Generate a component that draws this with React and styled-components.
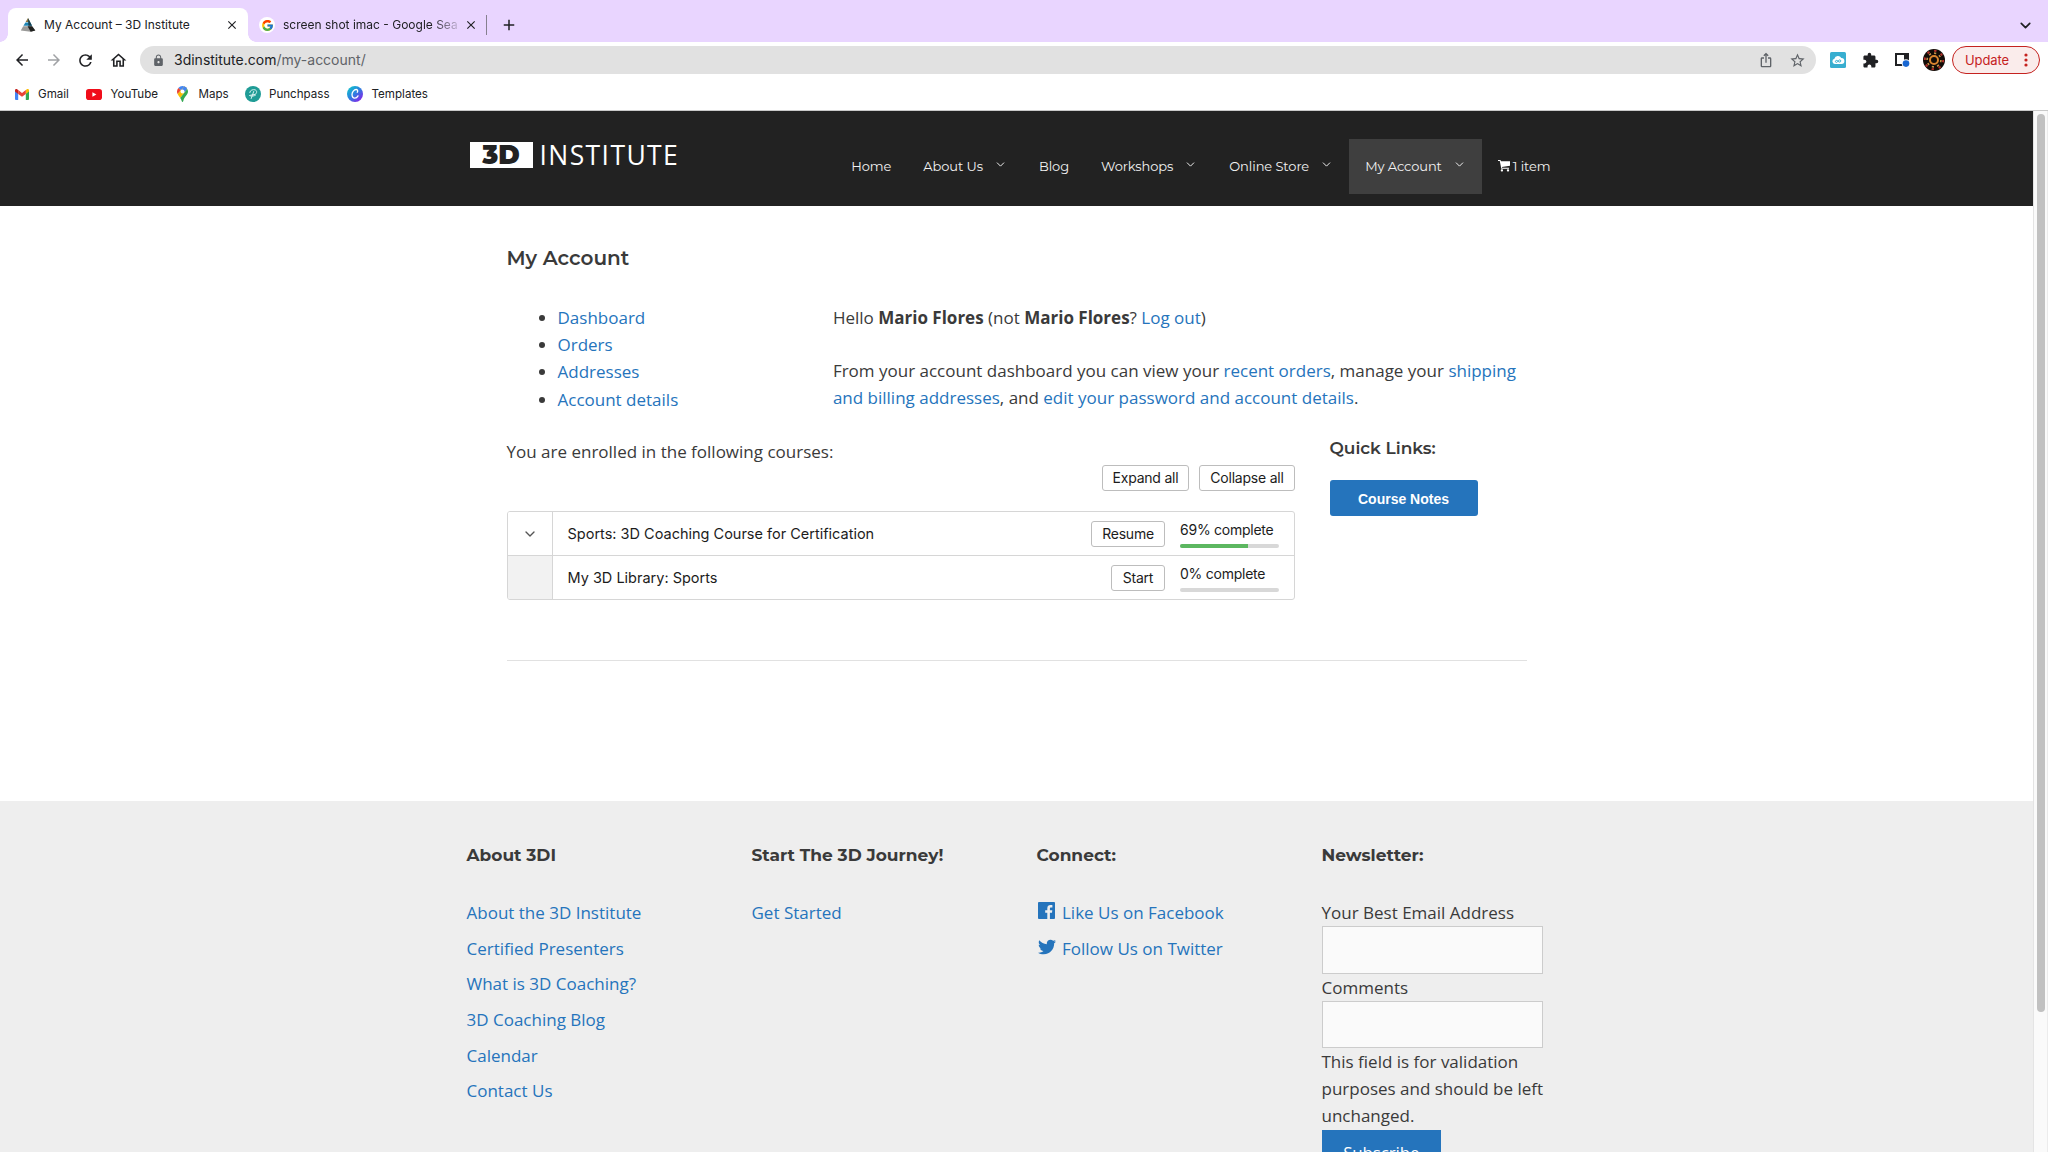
import React from "react";
import styled, { createGlobalStyle } from "styled-components";
import {
  MdArrowBack, MdArrowForward, MdRefresh, MdOutlineHome, MdLock, MdIosShare,
  MdStarBorder, MdExtension, MdClose, MdAdd,
} from "react-icons/md";
import { FaTwitter } from "react-icons/fa";
import { FcGoogle } from "react-icons/fc";
import { ChevronDown } from "lucide-react";

const UI = `Inter, "Liberation Sans", sans-serif`;
const BODY = `"Open Sans", "Noto Sans", sans-serif`;
const HEAD = `Montserrat, Inter, sans-serif`;
const BLUE = "#2574bc";

const GlobalStyle = createGlobalStyle`
  *, *::before, *::after { box-sizing: border-box; }
  body { margin: 0; background: #fff; }
  a { color: inherit; text-decoration: none; }
  svg { display: block; flex: none; }
`;

const Window = styled.div`
  width: 2048px;
  height: 1152px;
  overflow: hidden;
  display: flex;
  flex-direction: column;
  font-family: ${UI};
  color: #202124;
`;

/* ---------- browser chrome ---------- */
const TabStrip = styled.div`
  height: 42px;
  flex: none;
  background: #e9d5ff;
  display: flex;
  align-items: flex-end;
  padding: 0 14px 0 8px;
`;
const Tab = styled.div`
  height: 34px;
  width: ${(p) => p.$width}px;
  display: flex;
  align-items: center;
  padding: 0 ${(p) => (p.$active ? 9 : 2)}px 0 ${(p) => (p.$active ? 12 : 11)}px;
  position: relative;
  background: ${(p) => (p.$active ? "#fff" : "transparent")};
  border-radius: 8px 8px 0 0;
  &::before, &::after {
    content: "";
    display: ${(p) => (p.$active ? "block" : "none")};
    position: absolute;
    bottom: 0;
    width: 8px;
    height: 8px;
  }
  &::before { left: -8px; background: radial-gradient(circle at 0 0, transparent 7.5px, #fff 8px); }
  &::after { right: -8px; background: radial-gradient(circle at 100% 0, transparent 7.5px, #fff 8px); }
`;
const TabTitle = styled.span`
  flex: 1;
  font-size: 12px;
  line-height: 16px;
  margin-left: ${(p) => p.$gap}px;
  white-space: nowrap;
  overflow: hidden;
  mask-image: ${(p) => (p.$fade ? "linear-gradient(90deg, #000 150px, transparent 180px)" : "none")};
`;
const TabSeparator = styled.i`
  width: 1px;
  height: 20px;
  background: #86808f;
  margin: 0 13px 7px 6px;
`;
const TabSlot = styled.div`
  height: 34px;
  display: flex;
  align-items: center;
  margin-left: ${(p) => (p.$end ? "auto" : 0)};
`;
const IconDisc = styled.span`
  width: 16px;
  height: 16px;
  border-radius: 50%;
  background: #fff;
  display: grid;
  place-items: center;
`;

const Toolbar = styled.div`
  height: 36px;
  flex: none;
  display: flex;
  align-items: center;
  padding: 0 8px 0 13px;
  background: #fff;
`;
const NavButtons = styled.div`
  display: flex;
  gap: 13.5px;
  width: 127px;
  color: #202124;
`;
const Omnibox = styled.div`
  width: 1676px;
  height: 28px;
  border-radius: 14px;
  background: #e1e1e1;
  display: flex;
  align-items: center;
  padding: 0 10px 0 12px;
  color: #5f6368;
`;
const Url = styled.span`
  flex: 1;
  margin-left: 9px;
  font-size: 14px;
  line-height: 20px;
  color: #5f6368;
  b { font-weight: 400; color: #202124; }
`;
const OmniActions = styled.div`
  display: flex;
  gap: 15px;
`;
const Extensions = styled.div`
  flex: 1;
  display: flex;
  align-items: center;
  margin-left: 14px;
`;
const ExtSlot = styled.span`
  width: ${(p) => p.$width}px;
  display: flex;
`;
const UpdatePill = styled.button`
  width: 88px;
  height: 28px;
  margin-left: auto;
  padding: 0 11px 0 12px;
  border: 1px solid #c5221f;
  border-radius: 14px;
  background: #faeceb;
  color: #c5221f;
  font: 400 13px/20px ${UI};
  letter-spacing: -0.1px;
  display: flex;
  align-items: center;
  justify-content: space-between;
`;
const Bookmarks = styled.div`
  height: 33px;
  flex: none;
  display: flex;
  padding: 7px 0 0 15px;
  border-bottom: 1px solid #c9c9c9;
  font-size: 11.6px;
  line-height: 17px;
  background: #fff;
`;
const Bookmark = styled.a`
  width: ${(p) => p.$width}px;
  height: 18px;
  display: flex;
  align-items: center;
  gap: ${(p) => p.$gap}px;
`;

/* ---------- page ---------- */
const Viewport = styled.div`
  flex: 1;
  min-height: 0;
  display: flex;
`;
const Site = styled.main`
  flex: 1;
  overflow: hidden;
  display: flex;
  flex-direction: column;
  font: 400 17px/27.2px ${BODY};
  color: #3a3a3a;
`;
const ScrollTrack = styled.div`
  width: 15px;
  background: #fafafa;
  border-left: 1px solid #e4e4e4;
  border-right: 1px solid #ececec;
  padding: 3px 2px 0 3px;
`;
const ScrollThumb = styled.div`
  height: 898px;
  width: 8px;
  border-radius: 4px;
  background: #c1c1c1;
`;
const Header = styled.header`
  height: 95px;
  flex: none;
  background: #222;
`;
const HeaderInner = styled.div`
  width: 1100px;
  margin: 0 auto;
  display: flex;
  justify-content: space-between;
  padding-top: 28px;
`;
const Logo = styled.a`
  display: flex;
  align-items: center;
  height: 32px;
  padding: 0 0 0 3px;
  color: #fff;
`;
const LogoMark = styled.span`
  width: 63px;
  height: 26px;
  background: #fff;
  color: #222;
  display: grid;
  place-items: center;
  font: 900 26px/26px ${HEAD};
`;
const LogoWord = styled.span`
  margin-left: 7px;
  font: 400 26.5px/26px ${BODY};
  letter-spacing: 1.4px;
`;
const Nav = styled.nav`
  display: flex;
  font: 400 13px/55px ${HEAD};
  letter-spacing: -0.08px;
  color: #f2f2f2;
`;
const NavItem = styled.a`
  height: 55px;
  padding: 0 16px;
  display: flex;
  background: ${(p) => (p.$current ? "#3f3f3f" : "transparent")};
`;
const NavArrow = styled.span`
  width: 24px;
  height: 55px;
  padding: 0 0 4px 0;
  display: flex;
  align-items: center;
  justify-content: flex-end;
`;
const CartIcon = styled.span`
  height: 55px;
  padding: 0 3px 1px 0;
  display: flex;
  align-items: center;
`;

const Content = styled.article`
  width: 1100px;
  height: 595px;
  flex: none;
  margin: 0 auto;
  padding: 40px 40px 0;
`;
const PageTitle = styled.h1`
  margin: 0 0 34px;
  font: 600 20px/24px ${HEAD};
`;
const AccountGrid = styled.div`
  display: grid;
  grid-template-columns: 326.4px 1fr;
`;
const AccountNav = styled.ul`
  margin: 0;
  padding: 0 0 0 51px;
`;
const Link = styled.a`
  color: ${BLUE};
`;
const Paragraph = styled.p`
  margin: 0 0 25.5px;
  white-space: nowrap;
`;
const CoursesGrid = styled.div`
  display: grid;
  grid-template-columns: 788px 1fr;
  column-gap: 35px;
  margin-top: 1.4px;
  height: 223px;
  border-bottom: 1px solid #e1e1e1;
`;
const Intro = styled.p`
  margin: 0;
`;
const ButtonRow = styled.div`
  display: flex;
  justify-content: flex-end;
  gap: 10px;
  margin-bottom: 20px;
`;
const SmallButton = styled.button`
  width: ${(p) => p.$width}px;
  height: 26px;
  padding: 0 0 0 1px;
  border: 1px solid #bdbdbd;
  border-radius: 3px;
  background: #fff;
  color: #1c1c1c;
  font: 400 14px/22px ${UI};
  letter-spacing: -0.22px;
  text-align: center;
`;
const CourseTable = styled.div`
  border: 1px solid #d6d6d6;
  border-radius: 3px;
  overflow: hidden;
  font-family: ${UI};
  color: #1c1c1c;
`;
const CourseRow = styled.div`
  height: ${(p) => (p.$first ? 44 : 43)}px;
  border-bottom: ${(p) => (p.$first ? "1px solid #d6d6d6" : "0")};
  display: flex;
  align-items: center;
`;
const ToggleCell = styled.div`
  width: 45px;
  align-self: stretch;
  display: grid;
  place-items: center;
  border-right: 1px solid #d6d6d6;
  background: ${(p) => (p.$empty ? "#f2f2f2" : "#fff")};
  color: #555;
`;
const CourseName = styled.span`
  flex: 1;
  padding: 1px 0 0 15px;
  font-size: 14.5px;
  line-height: 22px;
`;
const Progress = styled.div`
  width: 99px;
  margin: 1px 15px 0;
`;
const ProgressLabel = styled.div`
  font-size: 14px;
  line-height: 18px;
  letter-spacing: -0.25px;
  padding-left: 0.5px;
  margin-bottom: 5px;
`;
const ProgressBar = styled.div`
  height: 4px;
  border-radius: 2px;
  background: #d8d8d8;
  overflow: hidden;
`;
const ProgressFill = styled.div`
  height: 4px;
  background: #5cb760;
`;
const QuickTitle = styled.h3`
  margin: -1px 0 21px;
  font: 600 17px/22px ${HEAD};
`;
const NotesButton = styled.a`
  display: block;
  width: 148px;
  height: 36px;
  border-radius: 3px;
  background: ${BLUE};
  color: #fff;
  text-align: center;
  font: 700 14px/38px "Liberation Sans", Arial, sans-serif;
`;

const Footer = styled.footer`
  flex: 1;
  min-height: 0;
  background: #eee;
`;
const FooterInner = styled.div`
  width: 1100px;
  margin: 0 auto;
  padding-top: 41px;
  display: grid;
  grid-template-columns: repeat(4, 245px);
  column-gap: 40px;
`;
const FooterTitle = styled.h2`
  margin: 0 0 30px;
  font: 700 17px/27px ${HEAD};
`;
const FooterLink = styled.a`
  display: flex;
  height: 27.2px;
  margin-bottom: 8.5px;
  color: ${BLUE};
`;
const SocialIcon = styled.span`
  width: 25.5px;
  padding: ${(p) => p.$top}px 0 0 1px;
`;
const FieldLabel = styled.label`
  display: block;
  height: 27px;
`;
const Field = styled.input`
  display: block;
  width: 221.5px;
  height: ${(p) => p.$height}px;
  border: 1px solid #ccc;
  border-radius: 0;
  background: #fafafa;
`;
const FieldNote = styled.p`
  margin: 0;
  width: 223px;
`;
const Subscribe = styled.button`
  display: block;
  width: 119.5px;
  height: 46px;
  border: 0;
  padding: 0;
  background: ${BLUE};
  color: #fff;
  font: 400 17px/46px ${BODY};
  letter-spacing: -0.15px;
`;

/* ---------- drawings ---------- */
const PyramidIcon = () => (
  <svg width="16" height="16" viewBox="0 0 16 16">
    <path d="M8 1L5.600 5h4.600z" fill="#8a7440" />
    <path d="M5.400 5.400h5l1.600 3.400H3.400z" fill="#1c84b4" />
    <path d="M8 1l2.400 4.400L12 8.800H8.400z" fill="#17414f" />
    <path d="M3.200 9.200h8.900l3.200 4.300-4.600 1.200L.8 13.600z" fill="#9a9a98" />
    <path d="M7.600 9.200h4.500l3.200 4.300-4.600 1.200z" fill="#20211f" />
  </svg>
);
const GmailIcon = () => (
  <svg width="14" height="11" viewBox="0 0 14 11">
    <path d="M0 1.500V10a1 1 0 001 1h2.200V4z" fill="#4285f4" />
    <path d="M14 1.500V10a1 1 0 01-1 1h-2.200V4z" fill="#34a853" />
    <path d="M10.800 1v3.900L14 2.500V1.400C14 .1 12.500-.4 11.600.4z" fill="#fbbc04" />
    <path d="M3.200 1v3.900L0 2.500V1.400C0 .1 1.500-.4 2.400.4z" fill="#c5221f" />
    <path d="M3.200 4.900V1L7 3.900 10.800 1v3.900L7 7.800z" fill="#ea4335" />
  </svg>
);
const YouTubeIcon = () => (
  <svg width="16" height="11" viewBox="0 0 16 11">
    <rect width="16" height="11" rx="2.800" fill="#f00d1a" />
    <path d="M6.400 3.200v4.600l4-2.300z" fill="#fff" />
  </svg>
);
const MapsIcon = () => (
  <svg width="11" height="16" viewBox="0 0 11 16">
    <path d="M5.500 0A5.500 5.500 0 001.300 2L4 4.200 7.200.3A5.500 5.500 0 005.500 0z" fill="#4285f4" />
    <path d="M1.300 2A5.500 5.500 0 000 5.500c0 1 .2 1.800.6 2.600L4 4.200z" fill="#ea4335" />
    <path d="M.6 8.100c.6 1.300 1.800 2.500 2.600 3.800l7-8.900A5.500 5.500 0 007.200.3z" fill="#fbbc04" />
    <path d="M7.200.3a5.500 5.500 0 013 2.600L7.300 6.400 4 4.200z" fill="#4285f4" />
    <path d="M10.200 2.900c.5.800.8 1.700.8 2.600 0 3.700-3.600 4.600-4.700 9.400-.3 1.400-1.300 1.400-1.600 0-.3-1.200-.8-2.100-1.500-3z" fill="#34a853" />
    <circle cx="5.500" cy="5.400" r="2" fill="#fff" />
  </svg>
);
const PunchpassIcon = () => (
  <svg width="16" height="16" viewBox="0 0 16 16">
    <circle cx="8" cy="8" r="8" fill="#1f9c96" />
    <path d="M4.800 6.500C5 4 8 3.300 10 3.800s2.300 3.300.2 4.500c-1.500.8-3 .3-4.600.8M8.700 5.500L6.200 12.500M4.500 9.600c2 .9 4.500.6 6-.4" fill="none" stroke="#d8f3f1" strokeWidth="1" strokeLinecap="round" />
  </svg>
);
const TemplatesIcon = () => (
  <svg width="16" height="16" viewBox="0 0 16 16">
    <defs>
      <linearGradient id="canvaFill" x1="0.100" y1="0.100" x2="0.800" y2="0.900">
        <stop offset="0" stopColor="#10c0cc" />
        <stop offset="0.500" stopColor="#2c7fe0" />
        <stop offset="1" stopColor="#7d2ae8" />
      </linearGradient>
    </defs>
    <circle cx="8" cy="8" r="8" fill="url(#canvaFill)" />
    <path d="M10.200 6.200c.8-.6.7-2.600-.9-2.700C7 3.400 5 6 5 8.600c0 2.300 1.200 3.600 2.800 3.500 1.400 0 2.500-.9 3.200-2.200" fill="none" stroke="#fff" strokeWidth="1.300" strokeLinecap="round" />
  </svg>
);
const CloudIcon = () => (
  <svg width="16" height="16" viewBox="0 0 16 16">
    <rect width="16" height="16" rx="1.500" fill="#38aed0" />
    <path d="M4.800 12a2.700 2.700 0 01-.4-5.300A3.700 3.700 0 0111.300 6a3 3 0 01.2 6z" fill="#fff" />
    <path d="M8 9.200c-1-1.300-2.600-.9-2.600.3s1.700 1.400 2.600-.3 2.800-1.700 2.800-.3S9 10.500 8 9.200z" fill="none" stroke="#38aed0" strokeWidth="1" />
  </svg>
);
const SidePanelIcon = () => (
  <svg width="16" height="16" viewBox="0 0 16 16">
    <path d="M1 1h14v13H1z" fill="#202124" />
    <path d="M3 3h7v9H3z" fill="#fff" />
    <circle cx="12" cy="11.600" r="4.300" fill="#fff" />
    <circle cx="12" cy="11.600" r="3.300" fill="#1967d2" />
  </svg>
);
const AvatarIcon = () => (
  <svg width="22" height="22" viewBox="0 0 22 22">
    <circle cx="11" cy="11" r="11" fill="#120c08" />
    <circle cx="11" cy="11" r="9.200" fill="none" stroke="#b5302a" strokeWidth="2" strokeDasharray="2.400 4.800" />
    <circle cx="11" cy="11" r="6.900" fill="none" stroke="#c8934a" strokeWidth="1.600" strokeDasharray="2.200 3.200" />
    <circle cx="11" cy="11" r="4" fill="none" stroke="#d9842e" strokeWidth="2" />
  </svg>
);
const DotsIcon = () => (
  <svg width="4" height="14" viewBox="0 0 4 14" fill="#c5221f">
    <circle cx="2" cy="2" r="1.600" />
    <circle cx="2" cy="7" r="1.600" />
    <circle cx="2" cy="12" r="1.600" />
  </svg>
);
const CartGlyph = () => (
  <svg width="12" height="12" viewBox="0 0 12 12" fill="#fff">
    <path d="M0 0h2.500l.4 1.200H12v4.600L3.900 6.900l.2.900H11v1H3.300L1.800 1H0z" />
    <rect x="2.800" y="9.300" width="2.200" height="2.200" rx="0.800" />
    <rect x="8.900" y="9.300" width="2.200" height="2.200" rx="0.800" />
  </svg>
);
const FacebookIcon = () => (
  <svg width="17" height="17" viewBox="0 0 17 17">
    <rect width="17" height="17" rx="0.900" fill={BLUE} />
    <path d="M9.300 17v-6.300H7.200V8.200h2.100V6.400c0-2.200 1.300-3.300 3.200-3.300.9 0 1.700.1 1.900.1v2.300h-1.300c-1 0-1.200.5-1.200 1.200v1.500h2.400l-.3 2.500h-2.100V17z" fill="#eee" />
  </svg>
);

const NAV_ITEMS = [
  { label: "Home" },
  { label: "About Us", menu: true },
  { label: "Blog" },
  { label: "Workshops", menu: true },
  { label: "Online Store", menu: true },
  { label: "My Account", menu: true, current: true },
];
const BOOKMARKS = [
  { label: "Gmail", icon: <GmailIcon />, width: 71, gap: 9 },
  { label: "YouTube", icon: <YouTubeIcon />, width: 91, gap: 8.5 },
  { label: "Maps", icon: <MapsIcon />, width: 68, gap: 10.5 },
  { label: "Punchpass", icon: <PunchpassIcon />, width: 102, gap: 8 },
  { label: "Templates", icon: <TemplatesIcon />, width: 90, gap: 8.5 },
];
const COURSES = [
  { name: "Sports: 3D Coaching Course for Certification", action: "Resume", width: 74, done: 69, open: true },
  { name: "My 3D Library: Sports", action: "Start", width: 54, done: 0 },
];
const ABOUT_LINKS = [
  "About the 3D Institute", "Certified Presenters", "What is 3D Coaching?",
  "3D Coaching Blog", "Calendar", "Contact Us",
];

function BrowserChrome() {
  return (
    <>
      <TabStrip>
        <Tab $active $width={240}>
          <PyramidIcon />
          <TabTitle $gap={8}>My Account – 3D Institute</TabTitle>
          <MdClose size={14} />
        </Tab>
        <Tab $width={232}>
          <IconDisc><FcGoogle size={13} /></IconDisc>
          <TabTitle $gap={8} $fade>screen shot imac - Google Sea</TabTitle>
          <MdClose size={14} />
        </Tab>
        <TabSeparator />
        <TabSlot><MdAdd size={18} /></TabSlot>
        <TabSlot $end><ChevronDown size={17} strokeWidth={2.4} /></TabSlot>
      </TabStrip>
      <Toolbar>
        <NavButtons>
          <MdArrowBack size={18} />
          <MdArrowForward size={18} color="#a0a2a5" />
          <MdRefresh size={19} />
          <MdOutlineHome size={19} />
        </NavButtons>
        <Omnibox>
          <MdLock size={13} />
          <Url><b>3dinstitute.com</b>/my-account/</Url>
          <OmniActions>
            <MdIosShare size={16} />
            <MdStarBorder size={17} />
          </OmniActions>
        </Omnibox>
        <Extensions>
          <ExtSlot $width={32}><CloudIcon /></ExtSlot>
          <ExtSlot $width={32}><MdExtension size={17} /></ExtSlot>
          <ExtSlot $width={29}><SidePanelIcon /></ExtSlot>
          <ExtSlot $width={22}><AvatarIcon /></ExtSlot>
          <UpdatePill>Update<DotsIcon /></UpdatePill>
        </Extensions>
      </Toolbar>
      <Bookmarks>
        {BOOKMARKS.map((b) => (
          <Bookmark key={b.label} $width={b.width} $gap={b.gap}>{b.icon}{b.label}</Bookmark>
        ))}
      </Bookmarks>
    </>
  );
}

function SiteHeader() {
  return (
    <Header>
      <HeaderInner>
        <Logo>
          <LogoMark>3D</LogoMark>
          <LogoWord>INSTITUTE</LogoWord>
        </Logo>
        <Nav>
          {NAV_ITEMS.map((n) => (
            <NavItem key={n.label} $current={n.current}>
              {n.label}
              {n.menu && <NavArrow><ChevronDown size={13} strokeWidth={1.8} /></NavArrow>}
            </NavItem>
          ))}
          <NavItem>
            <CartIcon><CartGlyph /></CartIcon>
            1 item
          </NavItem>
        </Nav>
      </HeaderInner>
    </Header>
  );
}

function Courses() {
  return (
    <CoursesGrid>
      <div>
        <Intro>You are enrolled in the following courses:</Intro>
        <ButtonRow>
          <SmallButton $width={87}>Expand all</SmallButton>
          <SmallButton $width={96}>Collapse all</SmallButton>
        </ButtonRow>
        <CourseTable>
          {COURSES.map((c) => (
            <CourseRow key={c.name} $first={c.open}>
              <ToggleCell $empty={!c.open}>{c.open && <ChevronDown size={16} strokeWidth={2} />}</ToggleCell>
              <CourseName>{c.name}</CourseName>
              <SmallButton $width={c.width}>{c.action}</SmallButton>
              <Progress>
                <ProgressLabel>{c.done}% complete</ProgressLabel>
                <ProgressBar><ProgressFill style={{ width: `${c.done}%` }} /></ProgressBar>
              </Progress>
            </CourseRow>
          ))}
        </CourseTable>
      </div>
      <div>
        <QuickTitle>Quick Links:</QuickTitle>
        <NotesButton>Course Notes</NotesButton>
      </div>
    </CoursesGrid>
  );
}

function SiteFooter() {
  return (
    <Footer>
      <FooterInner>
        <section>
          <FooterTitle>About 3DI</FooterTitle>
          {ABOUT_LINKS.map((l) => <FooterLink key={l}>{l}</FooterLink>)}
        </section>
        <section>
          <FooterTitle>Start The 3D Journey!</FooterTitle>
          <FooterLink>Get Started</FooterLink>
        </section>
        <section>
          <FooterTitle>Connect:</FooterTitle>
          <FooterLink><SocialIcon $top={3}><FacebookIcon /></SocialIcon>Like Us on Facebook</FooterLink>
          <FooterLink><SocialIcon $top={3}><FaTwitter size={18} /></SocialIcon>Follow Us on Twitter</FooterLink>
        </section>
        <section>
          <FooterTitle>Newsletter:</FooterTitle>
          <FieldLabel>Your Best Email Address</FieldLabel>
          <Field $height={48} />
          <FieldLabel>Comments</FieldLabel>
          <Field $height={47} />
          <FieldNote>This field is for validation purposes and should be left unchanged.</FieldNote>
          <Subscribe>Subscribe</Subscribe>
        </section>
      </FooterInner>
    </Footer>
  );
}

export default function App() {
  return (
    <Window>
      <GlobalStyle />
      <BrowserChrome />
      <Viewport>
        <Site>
          <SiteHeader />
          <Content>
            <PageTitle>My Account</PageTitle>
            <AccountGrid>
              <AccountNav>
                <li><Link>Dashboard</Link></li>
                <li><Link>Orders</Link></li>
                <li><Link>Addresses</Link></li>
                <li><Link>Account details</Link></li>
              </AccountNav>
              <div>
                <Paragraph>
                  Hello <strong>Mario Flores</strong> (not <strong>Mario Flores</strong>? <Link>Log out</Link>)
                </Paragraph>
                <Paragraph>
                  From your account dashboard you can view your <Link>recent orders</Link>, manage your <Link>shipping<br />and billing addresses</Link>, and <Link>edit your password and account details</Link>.
                </Paragraph>
              </div>
            </AccountGrid>
            <Courses />
          </Content>
          <SiteFooter />
        </Site>
        <ScrollTrack><ScrollThumb /></ScrollTrack>
      </Viewport>
    </Window>
  );
}
